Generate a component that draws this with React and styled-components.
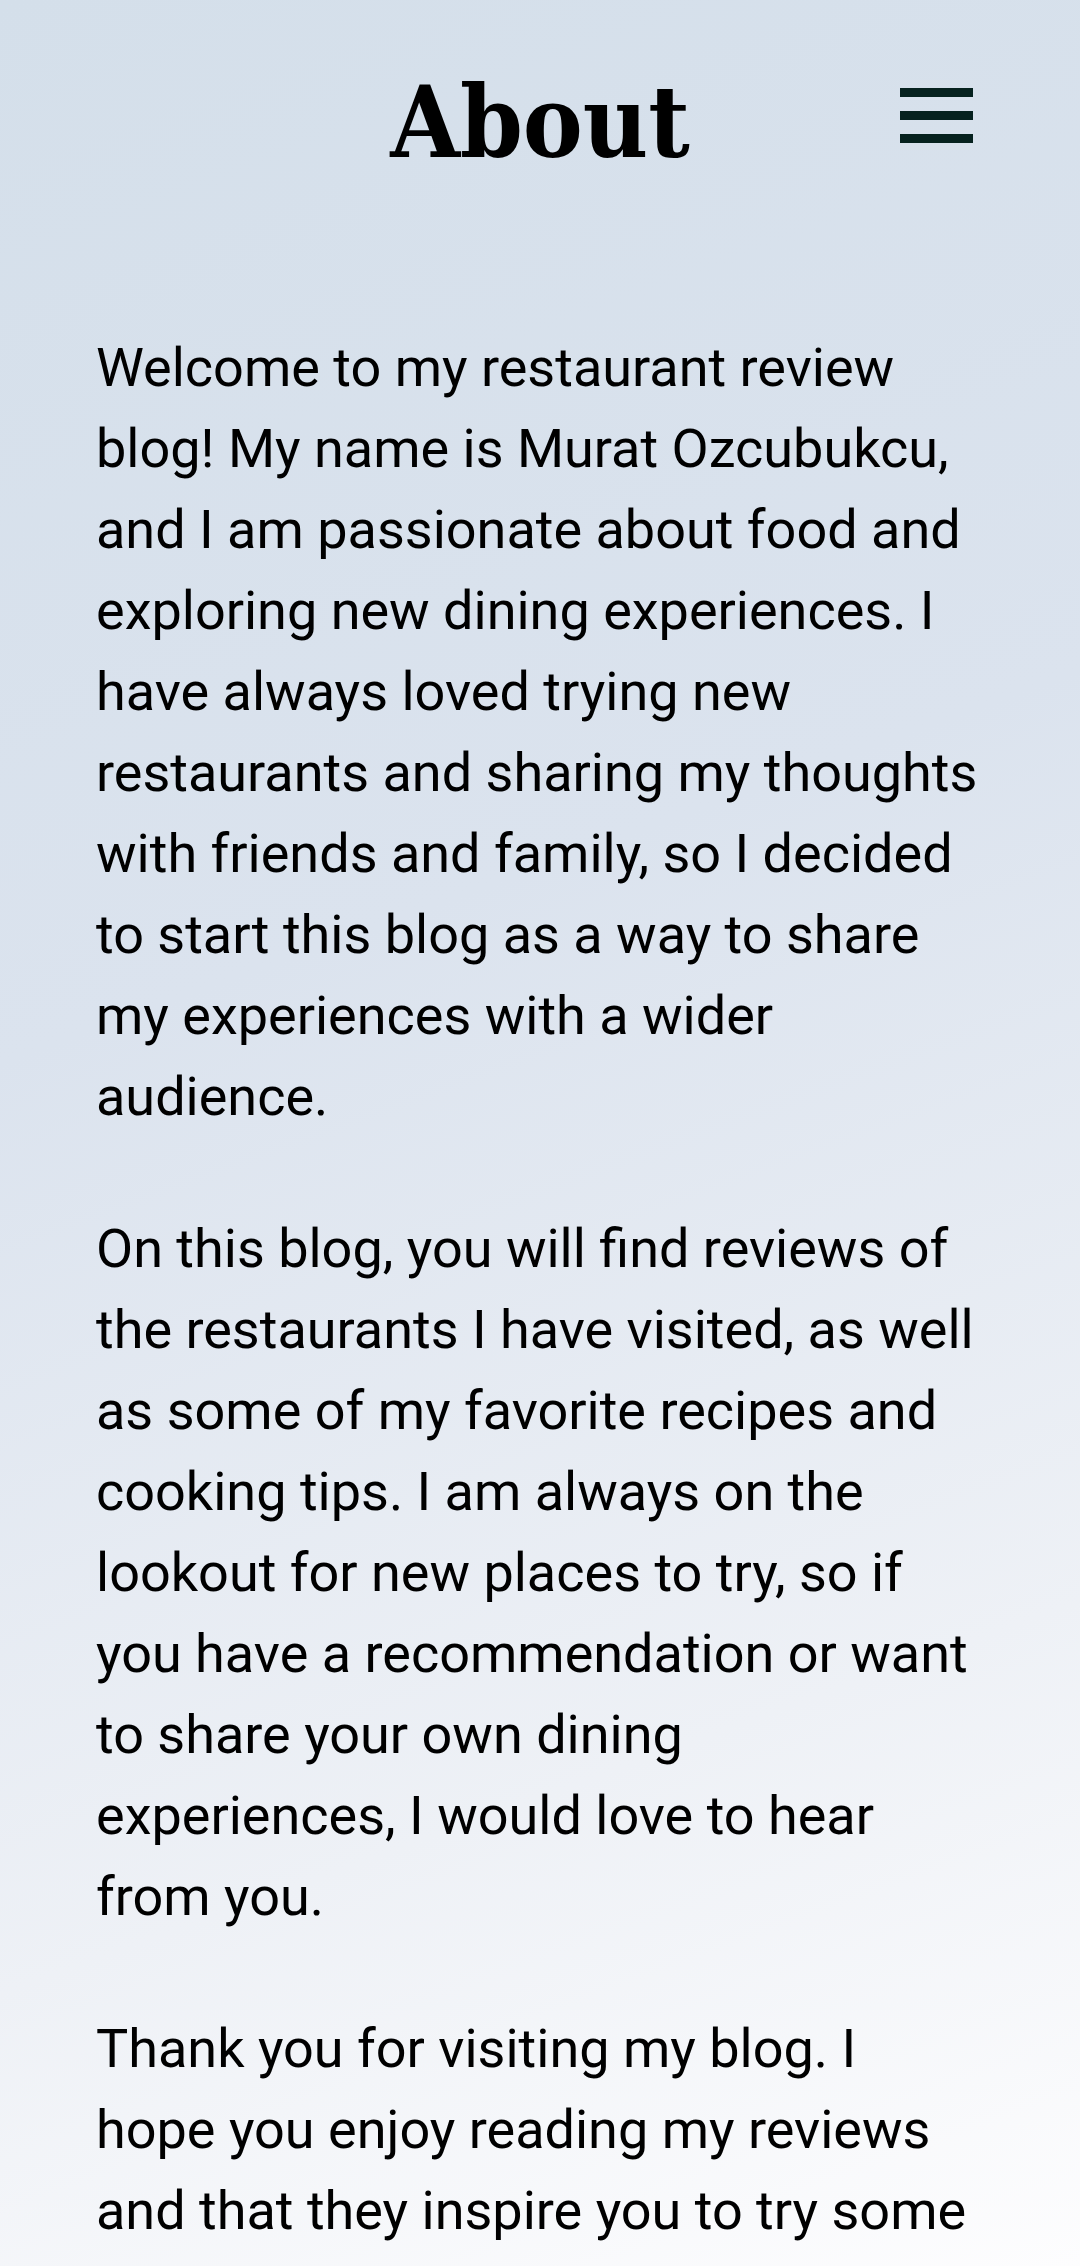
import React from 'react';
import styled, { createGlobalStyle } from 'styled-components';

const GlobalStyle = createGlobalStyle`
  html, body {
    margin: 0;
    padding: 0;
  }
  body {
    min-height: 100vh;
    background: linear-gradient(160deg, #d4dfea 0%, #dbe3ee 40%, #eef1f6 75%, #fdfdfe 100%) fixed;
    font-family: Roboto, "Liberation Sans", sans-serif;
    color: #000;
  }
`;

const Header = styled.header`
  display: grid;
  grid-template-columns: 1fr auto 1fr;
  align-items: start;
  padding-top: 72px;
`;

const Title = styled.h1`
  grid-column: 2;
  margin: 0;
  font-family: "DejaVu Serif", "Liberation Serif", serif;
  font-stretch: condensed;
  font-weight: 700;
  font-size: 100px;
  line-height: 1;
`;

const MenuButton = styled.button`
  grid-column: 3;
  justify-self: end;
  display: flex;
  flex-direction: column;
  gap: 14px;
  margin: 16px 107px 0 0;
  padding: 0;
  border: none;
  background: none;
  cursor: pointer;
`;

const Bar = styled.span`
  display: block;
  width: 73px;
  height: 9px;
  background: #06221f;
`;

const Content = styled.main`
  padding: 155px 97px 0 96px;
`;

const Paragraph = styled.p`
  margin: 0 0 71px;
  font-size: 54px;
  line-height: 81px;
`;

const paragraphs = [
  'Welcome to my restaurant review blog! My name is Murat Ozcubukcu, and I am passionate about food and exploring new dining experiences. I have always loved trying new restaurants and sharing my thoughts with friends and family, so I decided to start this blog as a way to share my experiences with a wider audience.',
  'On this blog, you will find reviews of the restaurants I have visited, as well as some of my favorite recipes and cooking tips. I am always on the lookout for new places to try, so if you have a recommendation or want to share your own dining experiences, I would love to hear from you.',
  'Thank you for visiting my blog. I hope you enjoy reading my reviews and that they inspire you to try some new restaurants and dishes of your own. Happy eating!',
];

const App = () => {
  return (
    <>
      <GlobalStyle />
      <Header>
        <Title>About</Title>
        <MenuButton aria-label="Open menu">
          <Bar />
          <Bar />
          <Bar />
        </MenuButton>
      </Header>
      <Content>
        {paragraphs.map((text, i) => (
          <Paragraph key={i}>{text}</Paragraph>
        ))}
      </Content>
    </>
  );
};

export default App;
